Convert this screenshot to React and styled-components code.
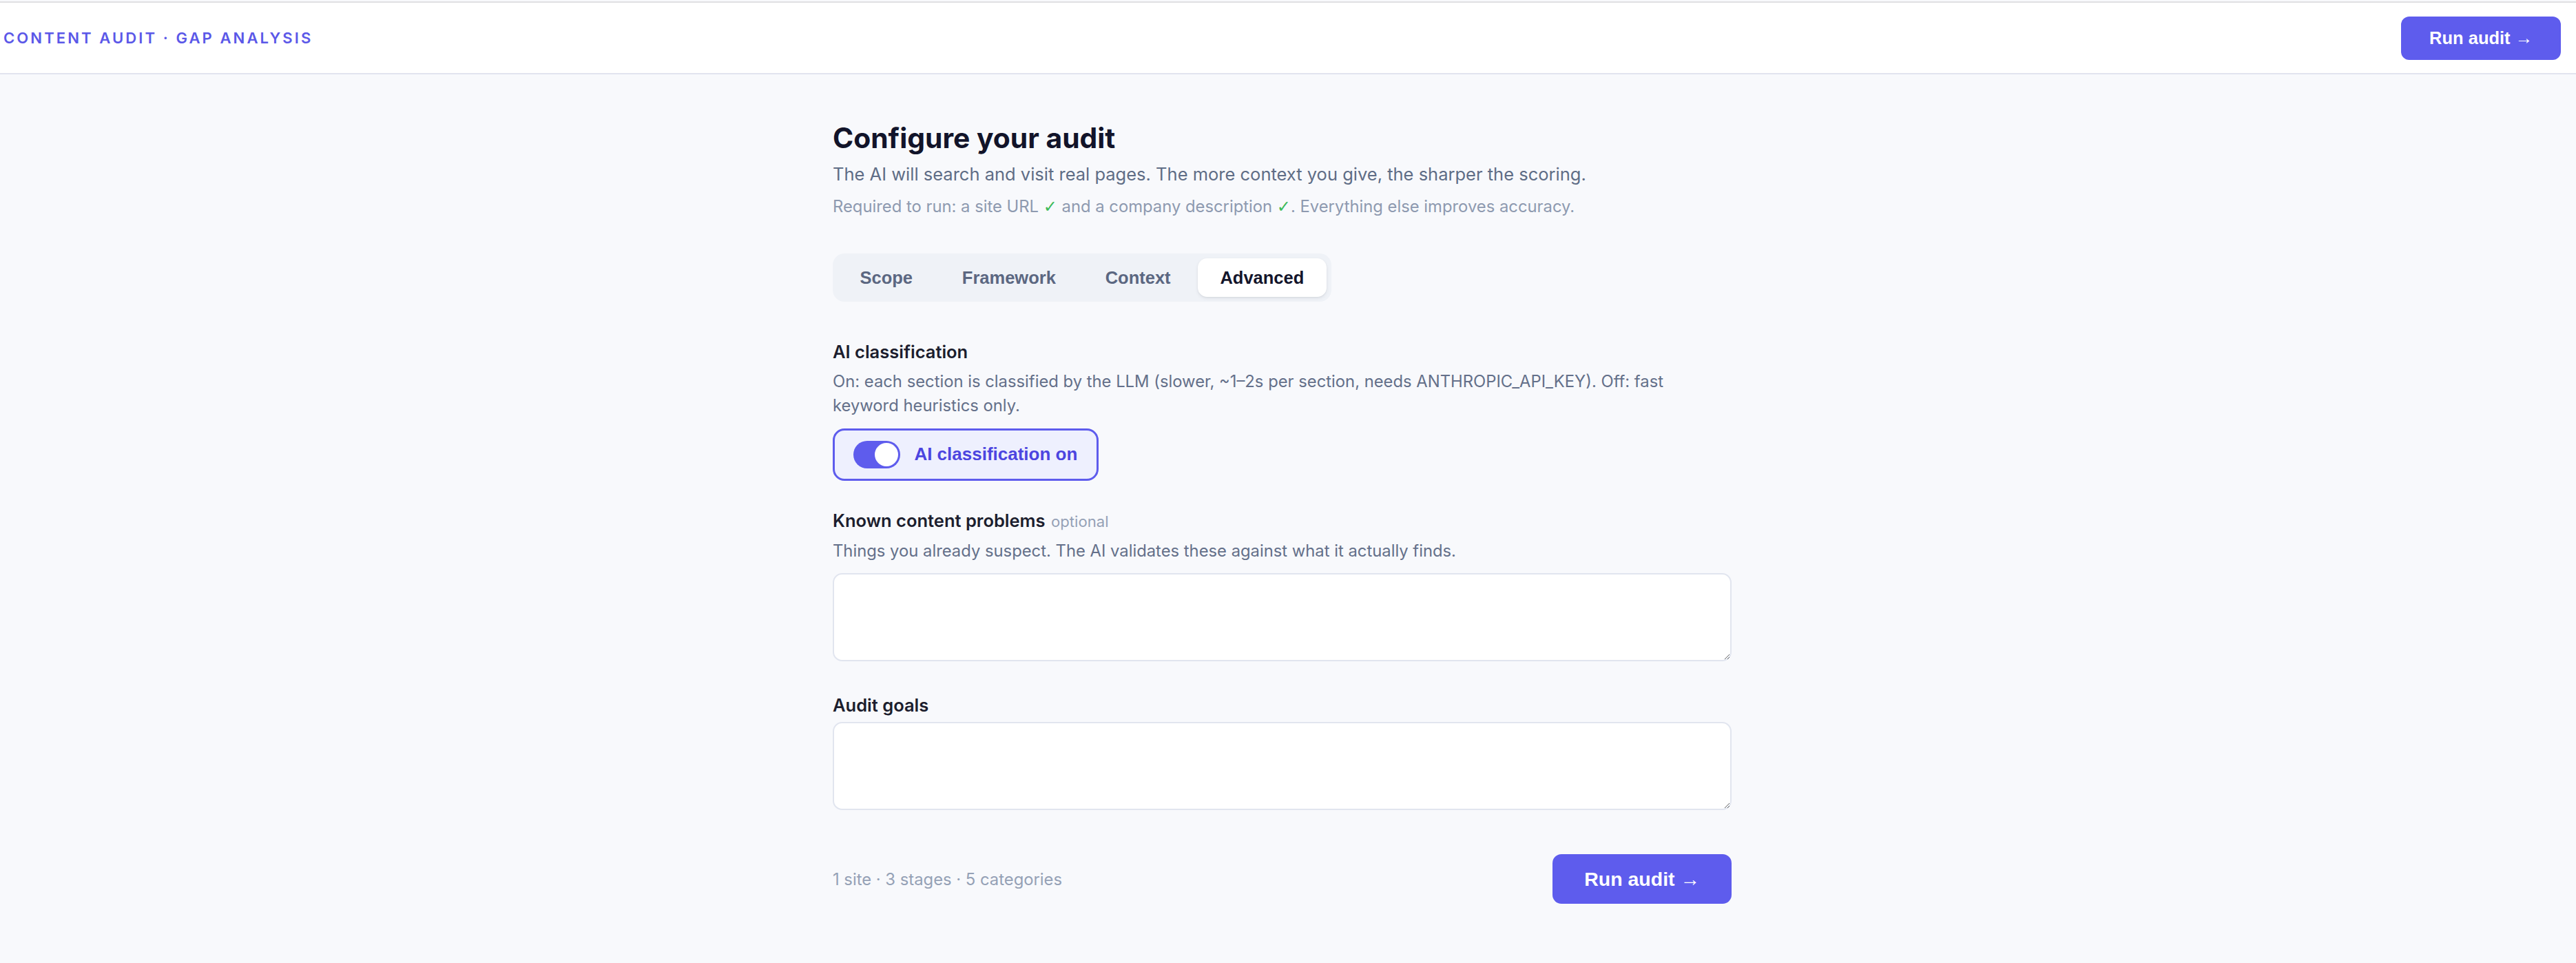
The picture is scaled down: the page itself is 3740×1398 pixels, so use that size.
import React from "react";
import styled, { createGlobalStyle } from "styled-components";

const GlobalStyle = createGlobalStyle`
  html, body { margin: 0; padding: 0; background: #f8f9fc; }
  body { font-family: Inter, "Noto Sans", sans-serif; }
  * { box-sizing: border-box; }
`;

const Shell = styled.div`
  min-height: 100vh;
  background: #f8f9fc;
  padding-top: 2px;
`;

const Header = styled.header`
  height: 106px;
  background: #ffffff;
  border-top: 2px solid #e0e0e2;
  border-bottom: 2px solid #e2e4ef;
  display: flex;
  align-items: center;
  justify-content: space-between;
  padding: 0 22px 0 5px;
`;

const Brand = styled.div`
  font-family: Inter, sans-serif;
  font-size: 22.1px;
  font-weight: 600;
  letter-spacing: 0.138em;
  color: #5b58e8;
  text-transform: uppercase;
`;

const PrimaryButton = styled.button`
  font-family: "Liberation Sans", Arial, sans-serif;
  font-weight: 700;
  font-size: ${(p) => (p.$large ? "28.5px" : "25.5px")};
  height: ${(p) => (p.$large ? "72px" : "63px")};
  padding: 0 ${(p) => (p.$large ? "46px" : "40.8px")};
  border: none;
  border-radius: ${(p) => (p.$large ? "13px" : "12px")};
  background: #5e5ced;
  color: #ffffff;
  cursor: pointer;
  display: inline-flex;
  align-items: center;
  white-space: nowrap;
`;

const MainWrap = styled.main`
  padding: 68px 17px 60px 0;
`;

const Column = styled.div`
  max-width: 1305px;
  margin: 0 auto;
`;

const Title = styled.h1`
  margin: 0;
  font-family: Inter, sans-serif;
  font-size: 40.8px;
  line-height: 1.2;
  font-weight: 700;
  color: #12142a;
`;

const Lead = styled.p`
  margin: 8.6px 0 0;
  font-size: 25.5px;
  line-height: 1.5;
  color: #5f6d86;
`;

const Hint = styled.p`
  margin: 11px 0 0;
  font-size: 23.8px;
  line-height: 33px;
  color: #8e9ab0;
`;

const Check = styled.span`
  color: #3dbb5a;
  font-family: "DejaVu Sans", sans-serif;
  font-size: 24px;
  line-height: 1;
`;

const TabBar = styled.div`
  margin-top: 52.4px;
  display: inline-flex;
  gap: 6.8px;
  padding: 7px;
  background: #eff2f7;
  border-radius: 17px;
`;

const Tab = styled.button`
  font-family: "Liberation Sans", Arial, sans-serif;
  font-weight: 700;
  font-size: 25.5px;
  height: 56px;
  padding: 0 32.5px;
  border: none;
  border-radius: 13.6px;
  background: ${(p) => (p.$active ? "#ffffff" : "transparent")};
  color: ${(p) => (p.$active ? "#13152b" : "#5b6781")};
  box-shadow: ${(p) =>
    p.$active ? "0 2px 5px rgba(15, 23, 42, 0.08), 0 1px 2px rgba(15,23,42,0.05)" : "none"};
  cursor: pointer;
`;

const Field = styled.section`
  margin-top: ${(p) => p.$gap}px;
  display: flex;
  flex-direction: column;
  align-items: flex-start;
`;

const Label = styled.div`
  font-size: 25.5px;
  line-height: 35.7px;
  font-weight: 600;
  color: #1c1e2e;
  margin-bottom: ${(p) => (p.$tight ? "6.8px" : "0")};
`;

const Optional = styled.span`
  margin-left: 8.5px;
  font-size: 22.1px;
  font-weight: 400;
  color: #95a1b6;
`;

const Desc = styled.p`
  margin: 6.8px 0 0;
  font-size: 23.8px;
  line-height: 35.4px;
  color: #64708a;
`;

const ToggleButton = styled.button`
  margin-top: 15px;
  height: 76px;
  display: inline-flex;
  align-items: center;
  gap: 20.4px;
  padding: 0 28px 0 27px;
  border: 3px solid #5e5ced;
  border-radius: 17px;
  background: #eef0fe;
  cursor: pointer;
`;

const Track = styled.span`
  position: relative;
  width: 68px;
  height: 40px;
  border-radius: 20px;
  background: ${(p) => (p.$on ? "#5e5ced" : "#cbd5e1")};
  flex: none;
`;

const Knob = styled.span`
  position: absolute;
  top: 3px;
  left: ${(p) => (p.$on ? "31px" : "3px")};
  width: 34px;
  height: 34px;
  border-radius: 50%;
  background: #ffffff;
`;

const ToggleText = styled.span`
  font-family: "Liberation Sans", Arial, sans-serif;
  font-weight: 700;
  font-size: 26px;
  color: #4c45e0;
`;

const TextArea = styled.textarea`
  display: block;
  width: 100%;
  height: 128px;
  margin-top: ${(p) => p.$top}px;
  border: 2px solid #e1e5ef;
  border-radius: 13.6px;
  background: #ffffff;
  font-family: Inter, sans-serif;
  font-size: 23.8px;
  padding: 17px 20px;
  outline: none;
  resize: vertical;
`;

const Footer = styled.div`
  margin-top: 64px;
  display: flex;
  align-items: center;
  justify-content: space-between;
`;

const Summary = styled.span`
  font-size: 23.8px;
  color: #95a1b6;
`;

const tabs = ["Scope", "Framework", "Context", "Advanced"];

export default function App() {
  return (
    <>
      <GlobalStyle />
      <Shell>
        <Header>
          <Brand>Content audit · Gap analysis</Brand>
          <PrimaryButton>Run audit →</PrimaryButton>
        </Header>
        <MainWrap>
          <Column>
            <Title>Configure your audit</Title>
            <Lead>
              The AI will search and visit real pages. The more context you give, the sharper the
              scoring.
            </Lead>
            <Hint>
              Required to run: a site URL <Check>✓</Check> and a company description{" "}
              <Check>✓</Check>. Everything else improves accuracy.
            </Hint>
            <TabBar>
              {tabs.map((t) => (
                <Tab key={t} $active={t === "Advanced"}>
                  {t}
                </Tab>
              ))}
            </TabBar>

            <Field $gap={55}>
              <Label>AI classification</Label>
              <Desc>
                On: each section is classified by the LLM (slower, ~1–2s per section, needs
                ANTHROPIC_API_KEY). Off: fast keyword heuristics only.
              </Desc>
              <ToggleButton>
                <Track $on>
                  <Knob $on />
                </Track>
                <ToggleText>AI classification on</ToggleText>
              </ToggleButton>
            </Field>

            <Field $gap={40}>
              <Label>
                Known content problems<Optional>optional</Optional>
              </Label>
              <Desc>Things you already suspect. The AI validates these against what it actually finds.</Desc>
              <TextArea $top={14.3} />
            </Field>

            <Field $gap={46}>
              <Label $tight>Audit goals</Label>
              <TextArea $top={0} />
            </Field>

            <Footer>
              <Summary>1 site · 3 stages · 5 categories</Summary>
              <PrimaryButton $large>Run audit →</PrimaryButton>
            </Footer>
          </Column>
        </MainWrap>
      </Shell>
    </>
  );
}
